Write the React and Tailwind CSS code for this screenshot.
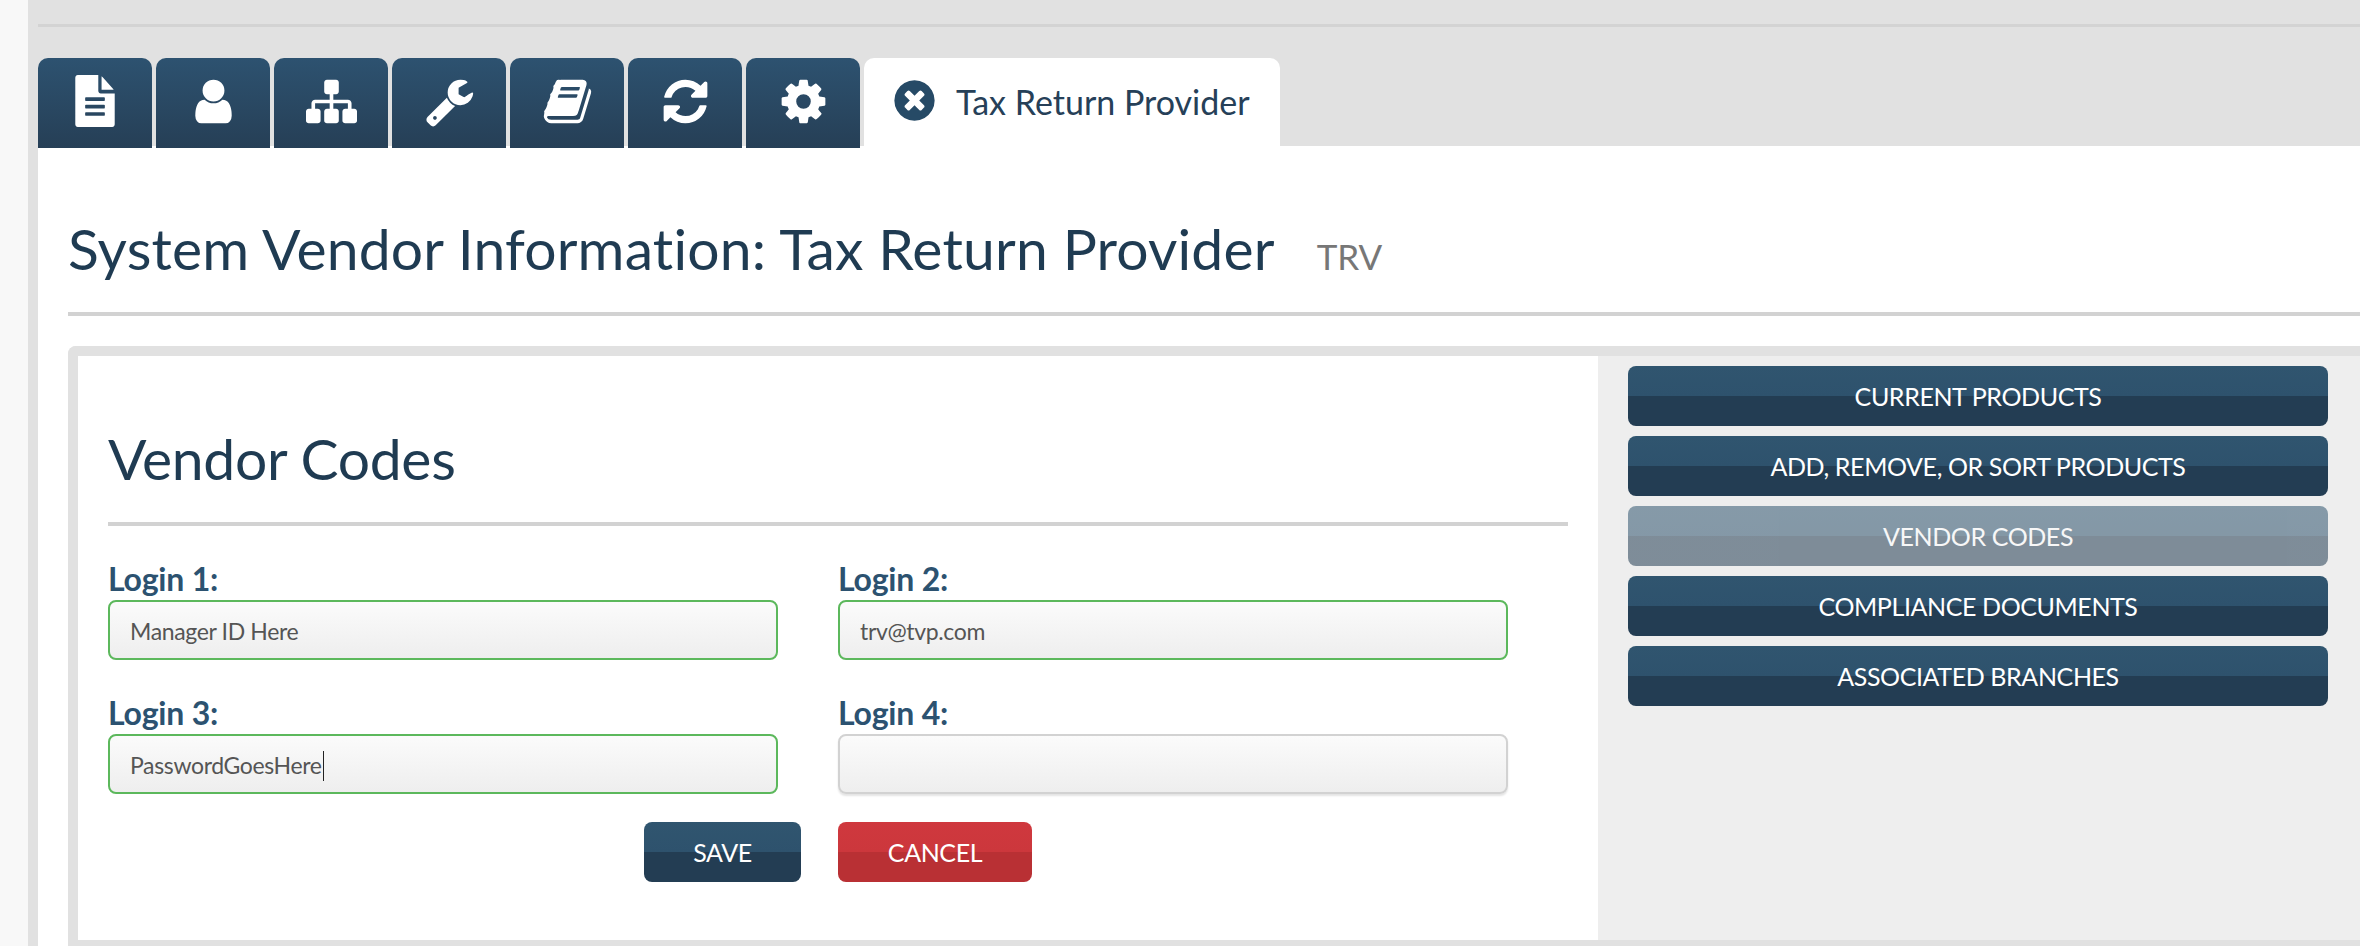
import React from 'react';

// Font Awesome 4 glyphs, viewBox 0 0 1792 1792
const ICONS = {
  file: 'M1596 476q14 14 28 36h-472v-472q22 14 36 28zm-476 164h544v1056q0 40-28 68t-68 28h-1344q-40 0-68-28t-28-68v-1600q0-40 28-68t68-28h800v544q0 40 28 68t68 28zm160 736v-64q0-14-9-23t-23-9h-704q-14 0-23 9t-9 23v64q0 14 9 23t23 9h704q14 0 23-9t9-23zm0-256v-64q0-14-9-23t-23-9h-704q-14 0-23 9t-9 23v64q0 14 9 23t23 9h704q14 0 23-9t9-23zm0-256v-64q0-14-9-23t-23-9h-704q-14 0-23 9t-9 23v64q0 14 9 23t23 9h704q14 0 23-9t9-23z',
  user: 'M1536 1399q0 109-62.5 187t-150.5 78h-854q-88 0-150.5-78t-62.5-187q0-85 8.5-160.5t31.5-152 58.5-131 94-89 134.5-34.5q131 128 313 128t313-128q76 0 134.5 34.5t94 89 58.5 131 31.5 152 8.5 160.5zm-256-887q0 159-112.5 271.5t-271.5 112.5-271.5-112.5-112.5-271.5 112.5-271.5 271.5-112.5 271.5 112.5 112.5 271.5z',
  sitemap: 'M1792 1248v320q0 40-28 68t-68 28h-320q-40 0-68-28t-28-68v-320q0-40 28-68t68-28h96v-192h-512v192h96q40 0 68 28t28 68v320q0 40-28 68t-68 28h-320q-40 0-68-28t-28-68v-320q0-40 28-68t68-28h96v-192h-512v192h96q40 0 68 28t28 68v320q0 40-28 68t-68 28h-320q-40 0-68-28t-28-68v-320q0-40 28-68t68-28h96v-192q0-52 38-90t90-38h512v-192h-96q-40 0-68-28t-28-68v-320q0-40 28-68t68-28h320q40 0 68 28t28 68v320q0 40-28 68t-68 28h-96v192h512q52 0 90 38t38 90v192h96q40 0 68 28t28 68z',
  wrench: 'M448 1472q0-26-19-45t-45-19-45 19-19 45 19 45 45 19 45-19 19-45zm644-420l-682 682q-37 37-90 37-52 0-91-37l-106-108q-38-36-38-90 0-53 38-91l681-681q39 98 114.5 173.5t173.5 114.5zm634-435q0 39-23 106-47 134-164.5 217.5t-258.5 83.5q-185 0-316.5-131.5t-131.5-316.5 131.5-316.5 316.5-131.5q58 0 121.5 16.5t107.5 46.5q16 11 16 28t-16 28l-293 169v224l193 107q5-3 79-48.5t135.5-81 70.5-35.5q15 0 23.5 10t8.5 25z',
  book: 'M1703 478q40 57 18 129l-275 906q-19 64-76.5 107.5t-122.5 43.5h-923q-77 0-148.5-53.5t-99.5-131.5q-24-67-2-127 0-4 3-27t4-37q1-8-3-21.5t-3-19.5q2-11 8-21t16.5-23.5 16.5-23.5q23-38 45-91.5t30-91.5q3-10 .5-30t-.5-28q3-11 17-28t17-23q21-36 42-92t25-90q1-9-2.5-32t.5-28q4-13 22-30.5t22-22.5q19-26 42.5-84.5t27.5-96.5q1-8-3-25.5t-2-26.5q2-8 9-18t18-23 17-21q8-12 16.5-30.5t15-35 16-36 19.5-32 26.5-23.5 36-11.5 47.5 5.5l-1 3q38-9 51-9h761q74 0 114 56t18 130l-274 906q-36 119-71.5 153.5t-128.5 34.5h-869q-27 0-38 15-11 16-1 43 24 70 144 70h923q29 0 56-15.5t35-41.5l300-987q7-22 5-57 38 15 59 43zm-1064 2q-4 13 2 22.5t20 9.5h608q13 0 25.5-9.5t16.5-22.5l21-64q4-13-2-22.5t-20-9.5h-608q-13 0-25.5 9.5t-16.5 22.5zm-83 256q-4 13 2 22.5t20 9.5h608q13 0 25.5-9.5t16.5-22.5l21-64q4-13-2-22.5t-20-9.5h-608q-13 0-25.5 9.5t-16.5 22.5z',
  refresh: 'M1639 1056q0 5-1 7-64 268-268 434.5t-478 166.5q-146 0-282.5-55t-243.5-157l-129 129q-19 19-45 19t-45-19-19-45v-448q0-26 19-45t45-19h448q26 0 45 19t19 45-19 45l-137 137q71 66 161 102t187 36q134 0 250-65t186-179q11-17 53-117 8-23 30-23h192q13 0 22.5 9.5t9.5 22.5zm25-800v448q0 26-19 45t-45 19h-448q-26 0-45-19t-19-45 19-45l138-138q-148-137-349-137-134 0-250 65t-186 179q-11 17-53 117-8 23-30 23h-199q-13 0-22.5-9.5t-9.5-22.5v-7q65-268 270-434.5t480-166.5q146 0 284 55.5t245 156.5l130-129q19-19 45-19t45 19 19 45z',
  cog: 'M1152 896q0-106-75-181t-181-75-181 75-75 181 75 181 181 75 181-75 75-181zm512-109v222q0 12-8 23t-20 13l-185 28q-19 54-39 91 35 50 107 138 10 12 10 25t-9 23q-27 37-99 108t-94 71q-12 0-26-9l-138-108q-44 23-91 38-16 136-29 186-7 28-36 28h-222q-14 0-24.5-8.5t-11.5-21.5l-28-184q-49-16-90-37l-141 107q-10 9-25 9-14 0-25-11-126-114-165-168-7-10-7-23 0-12 8-23 15-21 51-66.5t54-70.5q-27-50-41-99l-183-27q-13-2-21-12.5t-8-23.5v-222q0-12 8-23t19-13l186-28q14-46 39-92-40-57-107-138-10-12-10-24 0-10 9-23 26-36 98.5-107.5t94.5-71.5q13 0 26 10l138 107q44-23 91-38 16-136 29-186 7-28 36-28h222q14 0 24.5 8.5t11.5 21.5l28 184q49 16 90 37l142-107q9-9 24-9 13 0 25 10 129 119 165 170 7 8 7 22 0 12-8 23-15 21-51 66.5t-54 70.5q26 50 41 98l183 28q13 2 21 12.5t8 23.5z',
  close: 'M1277 1122q0-26-19-44l-181-181 181-181q19-19 19-45 0-27-19-45l-90-90q-18-19-45-19-26 0-45 19l-181 181-181-181q-19-19-45-19-27 0-45 19l-90 90q-19 18-19 45 0 26 19 45l181 181-181 181q-19 18-19 44 0 27 19 45l90 90q18 19 45 19 26 0 45-19l181-181 181 181q19 19 45 19 27 0 45-19l90-90q19-18 19-45zm387-226q0 209-103 385.5t-279.5 279.5-385.5 103-385.5-103-279.5-279.5-103-385.5 103-385.5 279.5-279.5 385.5-103 385.5 103 279.5 279.5 103 385.5z',
};

const Icon = ({ name, className }) => (
  <svg viewBox="0 0 1792 1792" fill="currentColor" preserveAspectRatio="none" className={className}>
    <path d={ICONS[name]} />
  </svg>
);

const TABS = ['file', 'user', 'sitemap', 'wrench', 'book', 'refresh', 'cog'];

const SIDE_LINKS = [
  { label: 'CURRENT PRODUCTS' },
  { label: 'ADD, REMOVE, OR SORT PRODUCTS' },
  { label: 'VENDOR CODES', current: true },
  { label: 'COMPLIANCE DOCUMENTS' },
  { label: 'ASSOCIATED BRANCHES' },
];

const FIELDS = [
  { label: 'Login 1:', value: 'Manager ID Here', valid: true },
  { label: 'Login 2:', value: 'trv@tvp.com', valid: true },
  { label: 'Login 3:', value: 'PasswordGoesHere', valid: true, caret: true },
  { label: 'Login 4:', value: '' },
];

const Field = ({ label, value, valid, caret }) => (
  <div className="w-[670px]">
    <div className="h-[44px] text-[32px] leading-[45px] font-bold tracking-[-0.2px] text-[#2c5270]">{label}</div>
    <div
      className={`flex h-[60px] items-center rounded-[8px] border-2 bg-gradient-to-b from-[#fbfbfb] to-[#eeeeee] px-[20px] pt-[3px] text-[23px] tracking-[-0.35px] text-[#555555] ${
        valid ? 'border-[#5cb85c]' : 'border-[#d2d2d2] shadow-[0_2px_2px_#e4e4e4]'
      }`}
    >
      {value}
      {caret && <span className="ml-px h-[30px] w-px bg-[#222222]" />}
    </div>
  </div>
);

const App = () => {
  return (
    <div className="flex h-[946px] w-[2360px] overflow-hidden bg-[#f8f8f8] pl-[28px] font-['Lato','Noto_Sans',sans-serif] text-[#1f3b52]">
      <div className="flex min-w-0 flex-1 flex-col bg-[#e1e1e1] pl-[10px]">
        <div className="h-[27px] shrink-0 border-b-[3px] border-[#d3d3d3]" />

        {/* Tabs */}
        <div className="relative z-10 mt-[31px] flex h-[88px] shrink-0 items-start gap-[4px]">
          {TABS.map((name) => (
            <div
              key={name}
              className="flex h-[90px] w-[114px] items-center justify-center rounded-t-[10px] bg-gradient-to-b from-[#2d5270] to-[#263f56] pb-[4px] text-white"
            >
              <Icon name={name} className={name === 'file' ? 'h-[52px] w-[46px]' : 'size-[51px]'} />
            </div>
          ))}
          <div className="flex h-[88px] w-[416px] items-center rounded-t-[10px] bg-white pb-[4px] pl-[27px]">
            <Icon name="close" className="size-[47px] text-[#264a66]" />
            <span className="ml-[18px] translate-y-px text-[34px] text-[#264058]">Tax Return Provider</span>
          </div>
        </div>

        <div className="flex min-h-0 flex-1 flex-col bg-white pl-[30px]">
          <div className="flex h-[170px] shrink-0 items-end border-b-4 border-[#d2d2d2] pb-[29px]">
            <h1 className="text-[57px] leading-[70px] tracking-[0.17px] text-[#1f3b52]">
              System Vendor Information: Tax Return Provider
            </h1>
            <span className="ml-[42px] translate-y-[3px] text-[35px] leading-[60px] text-[#777777]">TRV</span>
          </div>

          {/* Panel */}
          <div className="mt-[30px] flex h-[604px] shrink-0 rounded-tl-[8px] border-y-10 border-l-10 border-[#e1e1e1]">
            <div className="w-[1520px] shrink-0 bg-white px-[30px]">
              <div className="flex h-[170px] items-end border-b-4 border-[#d2d2d2] pb-[29px]">
                <h2 className="text-[57px] leading-[70px] tracking-[-0.3px] text-[#1f3b52]">Vendor Codes</h2>
              </div>
              <div className="mt-[30px] grid grid-cols-[730px_730px] gap-y-[30px]">
                {FIELDS.map((field) => (
                  <Field key={field.label} {...field} />
                ))}
              </div>
              <div className="mt-[28px] flex justify-center gap-[37px]">
                <button className="h-[60px] w-[157px] rounded-[8px] bg-[linear-gradient(#30556f,#2e526d_50%,#233d53_50%,#233d53)] pt-[2px] text-[25px] tracking-[-0.4px] text-white">
                  SAVE
                </button>
                <button className="h-[60px] w-[194px] rounded-[8px] bg-[linear-gradient(#cf383e,#cc373c_50%,#b93034_50%,#b93034)] pt-[2px] text-[25px] tracking-[-0.4px] text-white">
                  CANCEL
                </button>
              </div>
            </div>

            <div className="flex flex-1 flex-col gap-[10px] bg-[#eeeeee] pt-[10px] pl-[30px]">
              {SIDE_LINKS.map(({ label, current }) => (
                <button
                  key={label}
                  className={`h-[60px] w-[700px] rounded-[8px] bg-[linear-gradient(#30556f,#2e526d_50%,#233d53_50%,#233d53)] pt-[2px] text-[25px] tracking-[-0.4px] text-white ${
                    current ? 'opacity-55' : ''
                  }`}
                >
                  {label}
                </button>
              ))}
            </div>
          </div>
        </div>
      </div>
    </div>
  );
};

export default App;
